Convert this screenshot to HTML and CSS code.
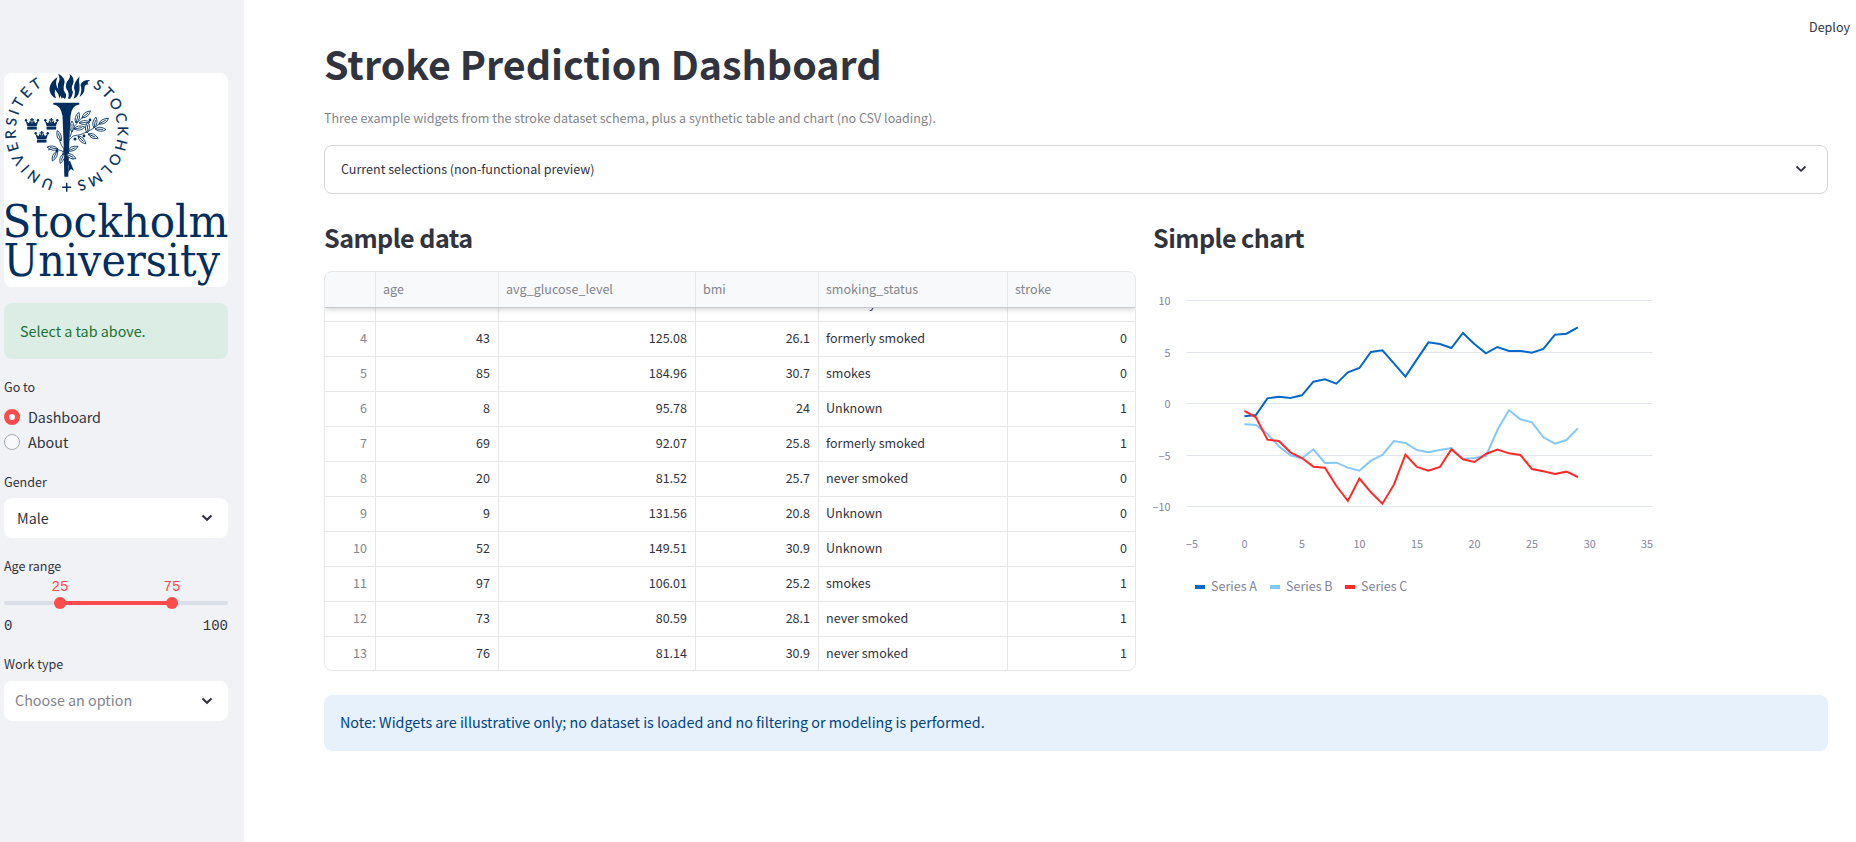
FILE: index.html
```html
<!DOCTYPE html>
<html lang="en">
<head>
<meta charset="utf-8">
<title>Stroke Prediction Dashboard</title>
<link rel="stylesheet" href="styles.css">
</head>
<body>
<aside class="sidebar">
  <svg class="logo" viewBox="0 0 224 214" role="img" aria-label="Stockholm University">
    <defs>
      <path id="ring" d="M62.7 109A51 51 0 0 1 62.7 7A51 51 0 0 1 62.7 109"/>
      <g id="crown">
        <path d="M-6.500-3.500L-4.500 2.500H4.500L6.500-3.500L3.200-.8L2-3.500L0-.5L-2-3.500L-3.200-.8Z"/>
        <rect x="-4.800" y="3" width="9.600" height="2.600"/>
        <circle cx="-6" cy="-3.800" r="1.200"/><circle cx="6" cy="-3.800" r="1.200"/>
        <path d="M-.6-6H.6V-4.700H2V-3.500H.6V-1H-.6V-3.500H-2V-4.700H-.6Z"/>
      </g>
      <path id="leaf" d="M0 0Q4-4.500 11-1Q6 3.500 0 0L8-.7"/>
    </defs>
    <g class="ring-text">
      <text><textPath href="#ring" startOffset="12.5" textLength="122" lengthAdjust="spacing">UNIVERSITET</textPath></text>
      <text><textPath href="#ring" startOffset="187" textLength="123" lengthAdjust="spacing">STOCKHOLMS</textPath></text>
    </g>
    <path class="plus" d="M62.700 109.800V118.800M58.200 114.300H67.200"/>
    <g class="ink">
      <path d="M49.300 29.700H75.300V31.500Q67.500 32.500 66.500 43L65.300 70L64.300 103.700H60.300L59.600 70L58.500 43Q57 32.500 49.300 31.500Z"/>
      <path d="M52 25.500Q45 22 45.500 15Q47 8 53.500 4Q50 12 55 17Q57.500 21 55.500 25.500Q54.500 20 51 16.500Q50 21 52 25.500Z"/>
      <path d="M58 26Q53 17 54 11Q57 6 54 .5Q62.500 5 60 12Q58.500 17 62 21Q62.500 24 61 26Q58 23 58 26Z"/>
      <path d="M64 25.500Q66 20 62.500 16Q60.500 11 65 6Q67 3 65 .5Q71.500 5 69 11Q66.500 15 69 19Q68.500 23 66 26Z"/>
      <path d="M69.500 25.500Q72 20 70 15Q70 9 75.500 3.500Q74.500 8 75.500 12Q76 17 74.500 21Q72.500 25 69.500 25.500Z"/>
      <path d="M75.500 24Q78.500 17 76.500 12Q78 6.500 86.500 7Q82 9 84.500 11.500Q80.500 11 80.500 15Q80.500 21 75.500 24Z"/>
      <use href="#crown" x="28" y="51"/><use href="#crown" x="47.300" y="51"/><use href="#crown" x="37.700" y="64"/>
      <path d="M66 88L70 98L67 96L64 99L65 93L63 89Z"/>
      <circle cx="71" cy="66" r="1.500"/><circle cx="80" cy="63" r="1.400"/><circle cx="86" cy="47" r="1.400"/><circle cx="53" cy="78" r="1.500"/><circle cx="69" cy="85" r="1.400"/>
    </g>
    <g class="branch">
      <path d="M58 84Q60 71 69 63Q83 62 99 48M66 64Q69 52 80 43M62 80Q52 74 44 77M60 76Q54 69 56 61M62 80Q68 74 72 76"/>
      <use href="#leaf" transform="translate(68 59)rotate(-85)"/>
      <use href="#leaf" transform="translate(72 50)rotate(-70)"/>
      <use href="#leaf" transform="translate(78 45)rotate(-35)"/>
      <use href="#leaf" transform="translate(70 56)rotate(-5)"/>
      <use href="#leaf" transform="translate(75 50)rotate(0)"/>
      <use href="#leaf" transform="translate(83 60)rotate(-80)"/>
      <use href="#leaf" transform="translate(90 55)rotate(-75)"/>
      <use href="#leaf" transform="translate(95 51)rotate(-25)"/>
      <use href="#leaf" transform="translate(84 61)rotate(28)"/>
      <use href="#leaf" transform="translate(91 56)rotate(8)"/>
      <use href="#leaf" transform="translate(74 63)rotate(50)"/>
      <use href="#leaf" transform="translate(57 68)rotate(-105)"/>
      <use href="#leaf" transform="translate(54 76)rotate(-165)"/>
      <use href="#leaf" transform="translate(53 78)rotate(120)"/>
      <use href="#leaf" transform="translate(60 80)rotate(115)"/>
      <use href="#leaf" transform="translate(64 78)rotate(-20)"/>
      <use href="#leaf" transform="translate(62 81)rotate(30)"/>
    </g>
    <text class="wordmark" x="-1.500" y="163.500" textLength="226" lengthAdjust="spacingAndGlyphs">Stockholm</text>
    <text class="wordmark" x="-.5" y="202.500" textLength="216.5" lengthAdjust="spacingAndGlyphs">University</text>
  </svg>
  <div class="alert alert-success">Select a tab above.</div>
  <div class="field field-radio">
    <div class="label">Go to</div>
    <div class="radios">
      <div class="radio"><span class="dot dot-on"></span>Dashboard</div>
      <div class="radio"><span class="dot"></span>About</div>
    </div>
  </div>
  <div class="field field-gender">
    <div class="label">Gender</div>
    <div class="select"><span>Male</span><svg class="chev" viewBox="0 0 12 8"><path d="M1.500 1.500L6 5.800L10.500 1.500"/></svg></div>
  </div>
  <div class="field field-slider">
    <div class="label">Age range</div>
    <div class="slider-values"><span>25</span><span>75</span></div>
    <div class="track"><div class="range"><span class="thumb"></span><span class="thumb"></span></div></div>
    <div class="limits"><span>0</span><span>100</span></div>
  </div>
  <div class="field">
    <div class="label">Work type</div>
    <div class="select placeholder"><span>Choose an option</span><svg class="chev" viewBox="0 0 12 8"><path d="M1.500 1.500L6 5.800L10.500 1.500"/></svg></div>
  </div>
</aside>
<main class="main">
  <div class="deploy">Deploy</div>
  <h1>Stroke Prediction Dashboard</h1>
  <p class="caption">Three example widgets from the stroke dataset schema, plus a synthetic table and chart (no CSV loading).</p>
  <div class="expander"><span>Current selections (non-functional preview)</span><svg class="chev chev-thin" viewBox="0 0 12 8"><path d="M1.500 1.500L6 5.800L10.500 1.500"/></svg></div>
  <div class="columns">
    <section>
      <h2>Sample data</h2>
      <div class="table">
        <div class="row head"><span></span><span>age</span><span>avg_glucose_level</span><span>bmi</span><span>smoking_status</span><span>stroke</span></div>
        <div class="rows">
          <div class="row"><span>3</span><span>19</span><span>154.60</span><span>38.3</span><span>formerly smoked</span><span>1</span></div>
          <div class="row"><span>4</span><span>43</span><span>125.08</span><span>26.1</span><span>formerly smoked</span><span>0</span></div>
          <div class="row"><span>5</span><span>85</span><span>184.96</span><span>30.7</span><span>smokes</span><span>0</span></div>
          <div class="row"><span>6</span><span>8</span><span>95.78</span><span>24</span><span>Unknown</span><span>1</span></div>
          <div class="row"><span>7</span><span>69</span><span>92.07</span><span>25.8</span><span>formerly smoked</span><span>1</span></div>
          <div class="row"><span>8</span><span>20</span><span>81.52</span><span>25.7</span><span>never smoked</span><span>0</span></div>
          <div class="row"><span>9</span><span>9</span><span>131.56</span><span>20.8</span><span>Unknown</span><span>0</span></div>
          <div class="row"><span>10</span><span>52</span><span>149.51</span><span>30.9</span><span>Unknown</span><span>0</span></div>
          <div class="row"><span>11</span><span>97</span><span>106.01</span><span>25.2</span><span>smokes</span><span>1</span></div>
          <div class="row"><span>12</span><span>73</span><span>80.59</span><span>28.1</span><span>never smoked</span><span>1</span></div>
          <div class="row"><span>13</span><span>76</span><span>81.14</span><span>30.9</span><span>never smoked</span><span>1</span></div>
        </div>
      </div>
    </section>
    <section>
      <h2>Simple chart</h2>
      <svg class="chart" viewBox="0 0 510 350" width="510" height="350">
        <path class="grid" d="M33.500 29.500H499.500M33.500 81.500H499.500M33.500 132.500H499.500M33.500 184.500H499.500M33.500 235.500H499.500"/>
        <g class="axis axis-y">
          <text x="17.500" y="34">10</text><text x="17.500" y="85.500">5</text><text x="17.500" y="137">0</text><text x="17.500" y="188.500">−5</text><text x="17.500" y="240">−10</text>
        </g>
        <g class="axis axis-x">
          <text x="39" y="277">−5</text><text x="91.500" y="277">0</text><text x="149" y="277">5</text><text x="206.500" y="277">10</text><text x="264" y="277">15</text><text x="321.500" y="277">20</text><text x="379" y="277">25</text><text x="436.700" y="277">30</text><text x="494" y="277">35</text>
        </g>
        <g class="lines" transform="translate(91.400 -71)scale(11.500 .33333)">
          <polyline class="a" points="0,649 1,645 2,595 3,590.5 4,594 5,586 6,545 7,538 8,551 9,517 10,504 11,456 12,451 13,490 14,530 15,478 16,427 17,432 18,444 19,399 20,432 21,460 22,441 23,453 24,453 25,458 26,447 27,404 28,401 29,382"/>
          <polyline class="b" points="0,673 1,675 2,701 3,739 4,766 5,775 6,748 7,789 8,788 9,803 10,812 11,782 12,765 13,723 14,729 15,750 16,757 17,750 18,744 19,777 20,774 21,768 22,690 23,631 24,658 25,667 26,712 27,731 28,720 29,685"/>
          <polyline class="c" points="0,633 1,652 2,719 3,723 4,757 5,774 6,800 7,803 8,858 9,903 10,836 11,877 12,911 13,854 14,764 15,801 16,812 17,801 18,748 19,778 20,786 21,762 22,749 23,760 24,765 25,807 26,814 27,822 28,815 29,831"/>
        </g>
        <g class="legend">
          <path class="a" d="M42 316H52"/><text x="58" y="320">Series A</text>
          <path class="b" d="M117 316H127"/><text x="133" y="320">Series B</text>
          <path class="c" d="M192 316H202"/><text x="208" y="320">Series C</text>
        </g>
      </svg>
    </section>
  </div>
  <div class="alert alert-info">Note: Widgets are illustrative only; no dataset is loaded and no filtering or modeling is performed.</div>
</main>
</body>
</html>
```
FILE: styles.css
```css
* { box-sizing: border-box; }
body {
  margin: 0; display: flex; height: 842px; overflow: hidden; background: #fff; color: #31333f;
  font: 14.33px/22px "Noto Sans CJK SC", "Noto Sans", sans-serif;
}

/* Sidebar */
.sidebar { flex: none; width: 244px; padding: 73px 16px 0 4px; background: #f0f2f6; }
.logo { display: block; width: 224px; height: 214px; background: #fff; border-radius: 8px; }
.ring-text { font: 14.5px "Lato", sans-serif; fill: #002f5f; stroke: #002f5f; stroke-width: .2; }
.ink { fill: #002f5f; }
.plus { stroke: #002f5f; stroke-width: 1.5; }
.branch { fill: #fff; stroke: #002f5f; stroke-width: .8; }
.branch > path { fill: none; }
.wordmark { font: 44px "DejaVu Serif", serif; fill: #002f5f; }

.alert { height: 56px; padding: 0 16px; line-height: 56px; border-radius: 8px; }
.alert-success { margin: 16px 0; color: #177233; background: #dcede6; }
.alert-info { margin-top: 24px; line-height: 54px; color: #004280; background: #e6f1fc; }

.field { margin-bottom: 16px; }
.label { height: 22px; font-size: 12.54px; }
.field-radio .label { line-height: 24px; }
.radios { padding-top: 7px; }
.radio { display: flex; align-items: center; gap: 8px; height: 25.5px; }
.dot { width: 16px; height: 16px; border: 1px solid #a9abb5; border-radius: 50%; background: #f9f9fb; }
.dot-on { border: 5px solid #ff4b4b; background: #fff; }
.select {
  display: flex; align-items: center; justify-content: space-between; height: 40px; margin-top: 6px;
  padding: 0 15px 0 13px; background: #fff; border-radius: 8px;
}
.field-gender { margin-bottom: 17px; }
.field-gender .select { margin-top: 5px; }
.placeholder { padding-left: 11px; color: #83858c; }
.placeholder span { padding-bottom: 2px; }
.chev { width: 12px; height: 8px; fill: none; stroke: #31333f; stroke-width: 2.2; }
.chev-thin { stroke-width: 1.8; }

.field-slider { height: 82px; font: 14px/20px "Liberation Mono", monospace; }
.field-slider .label { font: 12.54px/22px "Noto Sans CJK SC", sans-serif; }
.slider-values { display: grid; grid-template-columns: 1fr 1fr; text-align: center; color: #ff4b4b; }
.track { display: flex; justify-content: center; height: 4px; margin: 4px 0 11px; border-radius: 2px; background: #dadee9; }
.range { display: flex; align-items: center; justify-content: space-between; width: 124px; height: 4px; background: linear-gradient(#ff4b4b, #ff4b4b) center / 112px 4px no-repeat; }
.thumb { width: 12px; height: 12px; border-radius: 50%; background: #ff4b4b; }
.limits { display: flex; justify-content: space-between; }

/* Main */
.main { flex: 1; padding: 36px 28px 0 80px; }
.deploy { position: absolute; top: 16px; right: 6px; font-size: 12.54px; }
h1 { margin: 0 0 18px; font-size: 39.4px; line-height: 53px; font-weight: 700; }
.caption { margin: 0 0 16px; font-size: 12.54px; color: #83858c; }
.expander {
  display: flex; align-items: center; justify-content: space-between; height: 49px; padding: 0 20px 2px 16px;
  border: 1px solid #d6d6d9; border-radius: 8px; font-size: 12.54px;
}
.columns { display: grid; grid-template-columns: 812px 1fr; gap: 17px; }
h2 { margin: 25px 0 16px; font-size: 25.1px; line-height: 36px; font-weight: 600; letter-spacing: -.53px; }
.table { height: 400px; border: 1px solid #e6e7e9; border-radius: 8px; overflow: hidden; font-size: 12.54px; }
.row { display: grid; grid-template-columns: 51px 123px 197px 123px 189px 1fr; height: 35px; border-bottom: 1px solid #e6e7e9; }
.row span { padding: 0 8px 0 7px; line-height: 32px; text-align: right; border-right: 1px solid #e6e7e9; }
.row span:first-child { color: #83858c; }
.row span:nth-child(5) { text-align: left; }
.row span:last-child { border-right: 0; }
.row.head { position: relative; background: #f8f9fb; border-bottom-color: #c9cace; height: 36px; box-shadow: 0 1px 6px rgba(0, 0, 0, .2); }
.row.head span { line-height: 33px; text-align: left; color: #83858c; }
.rows { margin-top: -21px; }

.chart { display: block; }
.grid { stroke: #e2e6ef; fill: none; }
.axis { font-size: 10.75px; fill: #83859a; text-anchor: middle; }
.axis-y { text-anchor: end; }
.legend { font-size: 12.54px; fill: #83859a; }
.legend path { stroke-width: 4; }
.lines { fill: none; stroke-width: 2; }
.lines polyline { vector-effect: non-scaling-stroke; }
.a { stroke: #0068c9; }
.b { stroke: #83c9ff; }
.c { stroke: #ff2b2b; }
```
